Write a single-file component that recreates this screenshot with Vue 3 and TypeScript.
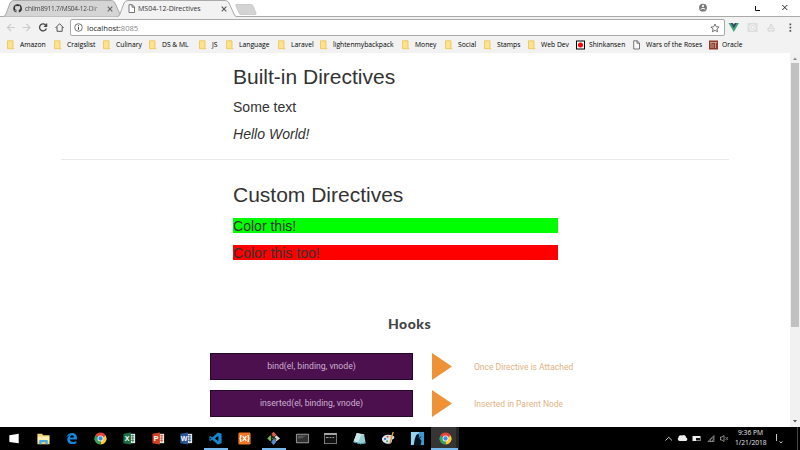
<script setup lang="ts">
interface Bookmark { label: string; kind: 'folder' | 'flag' | 'page' | 'museum'; width: number }
interface Hook { call: string; note: string }

const bookmarks: Bookmark[] = [
  { label: 'Amazon', kind: 'folder', width: 47 },
  { label: 'Craigslist', kind: 'folder', width: 49 },
  { label: 'Culinary', kind: 'folder', width: 46 },
  { label: 'DS & ML', kind: 'folder', width: 50 },
  { label: 'JS', kind: 'folder', width: 27 },
  { label: 'Language', kind: 'folder', width: 52 },
  { label: 'Laravel', kind: 'folder', width: 42 },
  { label: 'lightenmybackpack', kind: 'folder', width: 82 },
  { label: 'Money', kind: 'folder', width: 43 },
  { label: 'Social', kind: 'folder', width: 39 },
  { label: 'Stamps', kind: 'folder', width: 44 },
  { label: 'Web Dev', kind: 'folder', width: 48 },
  { label: 'Shinkansen', kind: 'flag', width: 57 },
  { label: 'Wars of the Roses', kind: 'page', width: 76 },
  { label: 'Oracle', kind: 'museum', width: 40 },
]

const hooks: Hook[] = [
  { call: 'bind(el, binding, vnode)', note: 'Once Directive is Attached' },
  { call: 'inserted(el, binding, vnode)', note: 'Inserted in Parent Node' },
]

const apps: { name: string; state?: string }[] = [
  { name: 'start' }, { name: 'explorer' }, { name: 'edge' }, { name: 'chrome' },
  { name: 'excel' }, { name: 'powerpoint' }, { name: 'word' }, { name: 'vscode', state: 'open' },
  { name: 'xampp' }, { name: 'git', state: 'open' }, { name: 'terminal' }, { name: 'cmd' },
  { name: 'notepad' }, { name: 'paint' }, { name: 'kindle' }, { name: 'chrome', state: 'active' },
]
const office: Record<string, { fill: string; letter: string }> = {
  excel: { fill: '#1d7044', letter: 'X' },
  powerpoint: { fill: '#d04424', letter: 'P' },
  word: { fill: '#2a5699', letter: 'W' },
}
</script>

<template>
  <div class="screen">
    <header class="strip">
      <div class="tab back">
        <svg class="shape" viewBox="0 0 120 17"><path d="M0 16.5 Q2 16.5 3 14 L7 3 Q8 .5 11 .5 H108 Q111 .5 112 3 L117 14 Q118 16.5 120 16.5" fill="#d5d5d5" stroke="#aaa" /></svg>
        <svg class="fav" viewBox="0 0 16 16"><path d="M8 .5a7.5 7.5 0 0 0-2.4 14.6c.4.1.5-.2.5-.4v-1.8c-2 .4-2.5-.7-2.7-1.4-.3-.5-.8-1-.8-1 .9-.3 1.5.4 1.8 1 .5.8 1.2.8 1.8.5.1-.5.3-.8.5-1C4.900 10.700 3.500 9.700 3.500 7.300c0-.9.3-1.600.8-2.200-.2-.5-.3-1.200.1-2.100 0 0 .8-.2 2.100.8a7 7 0 0 1 3.500 0c1.300-1 2.100-.8 2.100-.8.4.9.3 1.600.1 2.100.5.6.8 1.300.8 2.200 0 2.400-1.500 3.400-3.200 3.700.3.3.5.8.5 1.500v2.200c0 .2.1.5.5.4A7.500 7.500 0 0 0 8 .5z" fill="#333" /></svg>
        <span class="title one">chilm8911.7/MS04-12-Dir</span>
        <svg class="close" viewBox="0 0 6 6"><path d="M.7.7l4.600 4.600M5.300.7L.7 5.300" stroke="#666" stroke-width="1.100" /></svg>
      </div>
      <div class="tab front">
        <svg class="shape" viewBox="0 0 120 17"><path d="M0 17 Q2 16.500 3 14 L7 3 Q8 .5 11 .5 H108 Q111 .5 112 3 L117 14 Q118 16.500 120 17" fill="#f2f2f2" stroke="#aaa" /></svg>
        <svg class="fav" viewBox="0 0 9 9"><path d="M2 .7h3.200L7.500 3v5.500H2zM5 .7V3.200h2.500" fill="#fff" stroke="#555" stroke-width=".8" /></svg>
        <span class="title two">MS04-12-Directives</span>
        <svg class="close" viewBox="0 0 6 6"><path d="M.7.7l4.600 4.600M5.300.7L.7 5.300" stroke="#555" stroke-width="1.100" /></svg>
      </div>
      <svg class="newtab" viewBox="0 0 22 11"><path d="M1 .5h15q1.500 0 2 1.500l3 7q.5 1.500-1 1.500H6q-1.500 0-2-1.500L1 2Q.4.5 1 .5z" fill="#d3d3d3" stroke="#c4c4c4" stroke-width=".8" /></svg>
      <div class="window-tools">
        <svg viewBox="0 0 100 16" width="100" height="16">
          <circle cx="8" cy="7.700" r="3.900" fill="#777" /><circle cx="8" cy="6" r="1.200" fill="#eee" /><path d="M5.700 9.200q2.300-1.600 4.600 0" stroke="#fff" fill="none" />
          <path d="M60.500 6v4.500H65" fill="none" stroke="#111" />
          <path d="M87.300 5l5 5M92.300 5l-5 5" stroke="#111" stroke-width=".9" />
        </svg>
      </div>
    </header>

    <div class="toolbar">
      <svg class="nav" viewBox="0 0 68 18">
        <path d="M15 9.500H7.500M11 6l-3.600 3.500L11 13M22.500 9.500H30M26.500 6l3.600 3.500-3.600 3.500" fill="none" stroke="#ccc" stroke-width="1.100" />
        <path d="M46 7.500a3.500 3.500 0 1 0 .4 3M46.600 5.600v2.700h-2.700" fill="none" stroke="#4a4a4a" stroke-width="1.300" />
        <path d="M55.500 10l4.100-4.300L63.700 10M57 9v4.300h5.200V9" fill="none" stroke="#555" />
      </svg>
      <div class="address">
        <svg class="info" viewBox="0 0 9 9"><circle cx="4.500" cy="4.500" r="3.800" fill="none" stroke="#555" stroke-width=".8" /><path d="M4.500 4v2.700M4.500 2.200v1" stroke="#444" /></svg>
        <span class="url">localhost:<i>8085</i></span>
        <svg class="star" viewBox="0 0 10 10"><path d="M5 1l1.200 2.700 2.900.3-2.200 1.900.7 2.900L5 7.300 2.400 8.800l.7-2.900L.9 4l2.900-.3z" fill="none" stroke="#555" stroke-width=".8" /></svg>
      </div>
      <svg class="extensions" viewBox="0 0 76 18">
        <path d="M4.500 5h3l2.300 4L12 5h3L9.800 14z" fill="#41a580" /><path d="M6.800 5h2l1 1.500 1-1.500h2L9.800 10.300z" fill="#35495e" />
        <rect x="23.500" y="5" width="10" height="9" fill="#dedede" /><circle cx="28.500" cy="9.500" r="2.800" fill="none" stroke="#f8f8f8" /><circle cx="28.500" cy="9.500" r="1" fill="#fff" />
        <path d="M47 6l-1.500 3M47 6l1.500 3M44 10h6v3h-6z" fill="#eee" stroke="#cfcfcf" stroke-width=".9" />
        <path d="M65.500 5.500h1.700v1.700h-1.700zM65.500 8.800h1.700v1.700h-1.700zM65.500 12.100h1.700v1.700h-1.700z" fill="#555" />
      </svg>
    </div>

    <nav class="bookmarks">
      <a v-for="b in bookmarks" :key="b.label" :style="{ width: b.width + 'px' }">
        <svg viewBox="0 0 9 10">
          <path v-if="b.kind === 'folder'" d="M.5.8h5.500v6.700l1 1.200H.5z" fill="#ffe28b" stroke="#eac353" stroke-width=".8" />
          <template v-else-if="b.kind === 'flag'"><rect x=".5" y="1" width="8" height="8" fill="#fff" stroke="#000" /><circle cx="4.500" cy="5" r="2.500" fill="#f00" /></template>
          <path v-else-if="b.kind === 'page'" d="M.7.800h3.500L6.500 3v6H.7zM4 .8V3.200h2.500" fill="#f8f8f8" stroke="#555" stroke-width=".8" />
          <template v-else><rect width="9" height="9" y=".5" fill="#8c3b2d" /><path d="M1 2.500h7M2 3v5M4 4v4M6.500 3v5" stroke="#d6b9ad" stroke-width=".8" /></template>
        </svg>
        <span>{{ b.label }}</span>
      </a>
    </nav>

    <div class="viewport">
      <main>
        <section class="builtin">
          <h1>Built-in Directives</h1>
          <p>Some text</p>
          <p class="hello">Hello World!</p>
        </section>
        <hr>
        <section class="custom">
          <h1>Custom Directives</h1>
          <p class="lime">Color this!</p>
          <p class="red">Color this too!</p>
        </section>
        <section class="hooks">
          <h2>Hooks</h2>
          <div v-for="h in hooks" :key="h.call" class="hook">
            <code>{{ h.call }}</code>
            <svg viewBox="0 0 20 27"><path d="M0 0l20 13.500L0 27z" fill="#ef9136" /></svg>
            <span>{{ h.note }}</span>
          </div>
        </section>
      </main>
      <aside class="scrollbar">
        <svg viewBox="0 0 10 10"><path d="M3 7L5 4.500 7 7z" fill="#888" /></svg>
        <div class="thumb"></div>
        <svg viewBox="0 0 10 10"><path d="M3 3l2 2.500L7 3z" fill="#555" /></svg>
      </aside>
    </div>

    <footer class="taskbar">
      <div v-for="(a, i) in apps" :key="i" class="app" :class="a.state">
        <svg viewBox="0 0 16 16">
          <path v-if="a.name === 'start'" d="M2.500 4.500L12.500 3v10l-10-1.300z" fill="#fff" />
          <template v-else-if="a.name === 'explorer'"><path d="M1.500 3h5l1 1.500h7V14h-13z" fill="#f7d774" /><path d="M2 6h12v5H2z" fill="#fff0b0" /><path d="M3.500 14V9.500h9V14H10v-2H6v2z" fill="#4aa9df" /></template>
          <path v-else-if="a.name === 'edge'" d="M2.500 7C3.500 3.500 6 2 8.800 2c3.400 0 5 2.500 5 5v2H6.200c.4 3 4.300 3.300 7 1.600V13c-4.500 2.200-9.700.7-9.700-4 0-2 1.100-3.500 2.700-4.300-1.700.3-3 1.200-3.700 2.300zm4-.1h4c0-3.100-3.700-2.900-4 0z" fill="#1387dc" />
          <template v-else-if="a.name === 'chrome'">
            <path d="M8 8L2.370 4.750A6.500 6.500 0 0 1 13.630 4.750z" fill="#e34537" />
            <path d="M8 8L13.630 4.750A6.500 6.500 0 0 1 8 14.500z" fill="#fbca35" />
            <path d="M8 8V14.500A6.500 6.500 0 0 1 2.370 4.750z" fill="#37a65a" />
            <circle cx="8" cy="8" r="3.100" fill="#f5f5f5" /><circle cx="8" cy="8" r="2.300" fill="#4389ee" />
          </template>
          <template v-else-if="office[a.name]">
            <path d="M8 3h6v10H8z" fill="#e8eeee" /><path d="M9 5h4M9 7.500h4M9 10h4M11.500 4v8" :stroke="office[a.name].fill" stroke-width=".8" />
            <path d="M1.500 3L9.500 1.700v12.600L1.500 13z" :fill="office[a.name].fill" />
            <text x="5.500" y="10.700" text-anchor="middle" font-family="Liberation Sans, sans-serif" font-weight="700" font-size="7.500" fill="#fff">{{ office[a.name].letter }}</text>
          </template>
          <path v-else-if="a.name === 'vscode'" d="M10.500 1.500L14.500 3v10l-4 1.500-6-5.300-2 1.500-1-.6V5.900l1-.6 2 1.500zM11 5L7.300 8l3.700 3zM2.500 6.800v2.400L3.700 8z" fill="#1688d0" fill-rule="evenodd" />
          <template v-else-if="a.name === 'xampp'"><rect x="1.500" y="1.500" width="13" height="13" rx="1.500" fill="#f37623" /><path d="M5 4.800H4v2L3.200 8l.8 1.200v2h1M11 4.800h1v2l.8 1.200-.8 1.200v2h-1M6 5.500l4 5M10 5.500l-4 5" fill="none" stroke="#fff" stroke-width="1.300" /></template>
          <template v-else-if="a.name === 'git'"><path d="M8 .800L11 4 8 7 5 4z" fill="#e95c48" /><path d="M4.500 4.500L7.500 8 4.500 11 1.300 8z" fill="#76b651" /><path d="M8 8.500l3 3L8 15l-3-3.500z" fill="#5991e7" /><path d="M11 4.500L15 8l-4 3-3-3z" fill="#ddd" /><path d="M6 3v9M6 5l5 4" stroke="#222" stroke-width="1.200" /></template>
          <template v-else-if="a.name === 'terminal'"><rect x="1" y="3" width="14" height="10" rx="1" fill="#999" /><rect x="2" y="4" width="12" height="8" fill="#303030" /><path d="M3 5h9l-5 3H3z" fill="#555" /></template>
          <template v-else-if="a.name === 'cmd'"><rect x="1.500" y="2.500" width="13" height="11" fill="#111" stroke="#999" stroke-width=".8" /><path d="M1.500 3.300h13" stroke="#ddd" stroke-width="1.300" /><path d="M3 7h3M7 7h2M10 7h2" stroke="#ccc" stroke-width=".8" /></template>
          <template v-else-if="a.name === 'notepad'"><path d="M5 2.500l8 1.500 1.500 9-5.500 1-7.500-2z" fill="#98cfd5" /><path d="M5 2.500l5 1-3.500 9-5-1z" fill="#c8e8e8" /><path d="M2 11.500l7 2 5.500-1" fill="none" stroke="#4898a5" /><path d="M5 2.700l8 1.300" stroke="#ddd" stroke-width="1" /></template>
          <template v-else-if="a.name === 'paint'"><path d="M1 8.500C1.500 4.500 7 3 12 4.500c3 1 2.800 3.500.4 4.400-1.500.8 0 2-1.400 3.600C8.500 15 1 13 1 8.500z" fill="#d9e5ef" /><circle cx="4.300" cy="8.500" r="1.200" fill="#397bc2" /><circle cx="7" cy="6.200" r="1.100" fill="#d74635" /><circle cx="10.300" cy="6" r="1" fill="#e5b934" /><circle cx="6.500" cy="11" r="1.100" fill="#5aa14e" /><path d="M13 1L9.500 13" stroke="#dc934a" stroke-width="1.500" /></template>
          <template v-else><rect x="1" y="1" width="14" height="14" fill="#3d99ce" /><path d="M4 1h6L5.500 8v7H1V1z" fill="#9bd1ec" /><path d="M6.500 4.500l2-1.500 1.300 1.500L9.200 7l3 3-.8 5H4l1-6z" fill="#07131e" /><path d="M8 9l4-3" stroke="#07131e" /></template>
        </svg>
      </div>
      <div class="tray">
        <svg viewBox="0 0 70 23" width="70" height="23">
          <path d="M.500 13.500l3.200-3.200L7 13.500" fill="none" stroke="#ddd" stroke-width=".9" />
          <path d="M15 14a2 2 0 0 1-1.500-3.500A2.300 2.300 0 0 1 17 8.500c2-1.500 4 0 4 2 2 .5 1.500 3.500 0 3.500z" fill="#eee" />
          <path d="M27.500 9h8v5h-8z" fill="#eee" /><path d="M31 11h4v2.500h-4z" fill="#111" />
          <path d="M43 14.500l6-6v6zM45 14.500a4 4 0 0 1 4-4M47 14.500a2 2 0 0 1 2-2" fill="none" stroke="#999" stroke-width=".8" />
          <path d="M55.500 10h1.500l2-1.500v6L57 13h-1.500z" fill="none" stroke="#aaa" stroke-width=".8" /><path d="M60.500 10l2.500 3M63 10l-2.500 3" stroke="#888" stroke-width=".8" />
        </svg>
        <div class="clock"><span class="time">9:36 PM</span><span>1/21/2018</span></div>
        <svg class="notice" viewBox="0 0 34 23"><path d="M10.500 7v7M13.500 14.500l1.500 1.300 1.500-1.300" fill="none" stroke="#ddd" stroke-width=".9" /><path d="M31.500 0v23" stroke="#444" /></svg>
      </div>
    </footer>
  </div>
</template>

<style>
body { margin: 0; overflow: hidden; }
</style>
<style scoped>
* { box-sizing: border-box; }
svg { display: block; flex: none; }
.screen { width: 800px; height: 450px; display: flex; flex-direction: column; background: #fff; font-family: "Open Sans", "Noto Sans", sans-serif; overflow: hidden; }
.strip { height: 17px; flex: none; display: flex; border-bottom: 1px solid #aaa; padding-left: 3px; }
.tab { position: relative; width: 120px; height: 17px; display: flex; align-items: center; padding-left: 10px; }
.tab.front { margin-left: -6px; z-index: 1; }
.shape { position: absolute; left: 0; top: 0; width: 120px; height: 17px; }
.fav { position: relative; width: 9px; height: 9px; }
.title { position: relative; width: 78px; height: 12px; margin-left: 3px; font-size: 7px; line-height: 12px; white-space: nowrap; color: #333; }
.one { font-size: 6.600px; letter-spacing: -.24px; color: #444; -webkit-mask-image: linear-gradient(90deg, #000 75%, rgba(0, 0, 0, .35)); mask-image: linear-gradient(90deg, #000 75%, rgba(0, 0, 0, .35)); }
.close { position: relative; width: 6px; height: 6px; margin-left: 4px; }
.two { margin-left: 2px; }
.front .close { margin-left: 5px; }
.newtab { width: 22px; height: 11px; margin: 4px 0 0 -2px; }
.window-tools { margin-left: auto; width: 105px; }
.toolbar { height: 20px; flex: none; display: flex; background: #f2f2f2; }
.nav { width: 68px; height: 18px; margin-top: 1px; }
.address { width: 655px; height: 17px; margin: 2px 0 0 2px; border: 1px solid #a9a9a9; border-radius: 2px; background: #fff; display: flex; align-items: center; padding: 0 4px 0 3px; }
.info { width: 9px; height: 9px; }
.url { margin-left: 4px; font-size: 7.600px; line-height: 14px; color: #222; }
.url i { font-style: normal; color: #888; }
.star { width: 10px; height: 10px; margin-left: auto; }
.extensions { width: 76px; height: 18px; margin: 1px 0 0 -1px; }
.bookmarks { height: 16px; flex: none; display: flex; padding-left: 7px; background: #f2f2f2; }
.bookmarks a { display: flex; align-items: center; flex: none; height: 15px; font-size: 6.750px; white-space: nowrap; color: #000; }
.bookmarks svg { width: 9px; height: 10px; margin-right: 4px; }
.viewport { height: 374px; flex: none; display: flex; font-family: "Liberation Sans", Arial, sans-serif; color: #333; }
main { width: 790px; overflow: hidden; }
h1, p { margin: 0 0 0 233px; width: 325px; font-weight: 400; white-space: nowrap; }
h1 { font-size: 21px; line-height: 23px; }
p { height: 15px; padding-top: 1px; font-size: 14.060px; line-height: 15px; }
.builtin { height: 106px; padding-top: 12px; }
.builtin p { margin-top: 12px; }
.builtin h1 + p { margin-top: 11px; }
.hello { font-style: italic; }
hr { margin: 0 61px; border: 0; height: 1px; background: #eaeaea; }
.custom { height: 156px; padding-top: 23px; }
.custom p { margin-top: 12px; }
.lime { background: #0f0; }
.red { background: #f00; }
h2 { margin: 0 0 21px 388px; font: 900 14px/16px Lato, sans-serif; color: #444; letter-spacing: .5px; }
.hook { display: flex; align-items: center; height: 27px; margin: 0 0 10px 210px; font-family: Roboto, sans-serif; font-size: 8.500px; }
.hook code { width: 203px; height: 27px; background: #4d104f; border: 1px solid #24082b; text-align: center; font: 8.650px/25px Roboto, sans-serif; color: #cbb0d0; }
.hook svg { width: 20px; height: 27px; margin: 0 22px 0 19px; }
.hook span { color: #dfb284; white-space: nowrap; }
.scrollbar { width: 10px; background: #f1f1f1; }
.scrollbar svg { width: 10px; height: 10px; }
.thumb { width: 8px; height: 264px; margin: 0 1px 90px; background: #c1c1c1; }
.taskbar { height: 23px; flex: none; display: flex; background: #000; }
.app { width: 28.780px; height: 23px; display: grid; place-items: center; }
.app svg { width: 15px; height: 15px; }
.open { background: linear-gradient(#76b9ed, #76b9ed) 3px bottom / 24px 2px no-repeat; }
.active { background: linear-gradient(#76b9ed, #76b9ed) 0 bottom / 27px 2px no-repeat, linear-gradient(90deg, #353535 25px, #222 25px) 0 0 / 28px 23px no-repeat; }
.tray { margin-left: auto; display: flex; width: 135px; }
.clock { width: 31px; display: flex; flex-direction: column; padding-top: 1px; text-align: center; font-size: 6.700px; line-height: 10px; color: #e8e8e8; white-space: nowrap; }
.notice { width: 34px; height: 23px; }
</style>
